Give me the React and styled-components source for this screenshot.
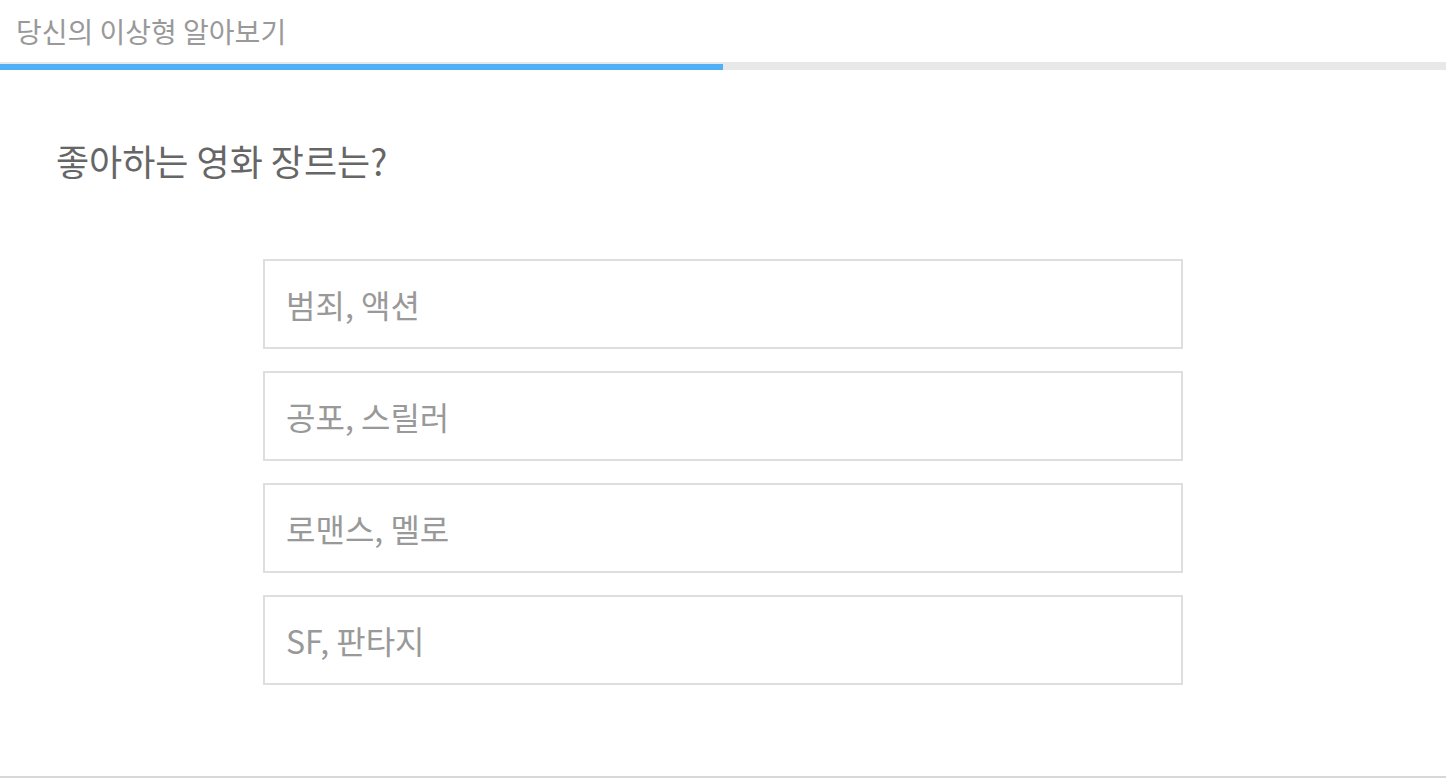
import styled, { createGlobalStyle } from "styled-components";

const GlobalStyle = createGlobalStyle`
  * {
    box-sizing: border-box;
  }

  body {
    margin: 0;
    background: #fff;
    font-family: "Noto Sans CJK KR", "Noto Sans", sans-serif;
  }
`;

const genres = ["범죄, 액션", "공포, 스릴러", "로맨스, 멜로", "SF, 판타지"];

const App = () => {
  const step = 1;
  const total = 2;

  return (
    <Page>
      <GlobalStyle />
      <Header>
        <Title>당신의 이상형 알아보기</Title>
      </Header>
      <Track>
        <Fill style={{ width: `${(step / total) * 100}%` }} />
      </Track>
      <Main>
        <Question>좋아하는 영화 장르는?</Question>
        <Options>
          {genres.map((genre) => (
            <Option key={genre}>{genre}</Option>
          ))}
        </Options>
      </Main>
    </Page>
  );
};

export default App;

const Page = styled.div`
  width: 100%;
`;

const Header = styled.header`
  height: 62px;
  padding: 0 16px;
  display: flex;
  align-items: center;
`;

const Title = styled.h1`
  margin: 0;
  font-size: 28px;
  font-weight: 400;
  color: #999;
`;

const Track = styled.div`
  height: 8px;
  padding-top: 2px;
  background: #e8e8e8;
`;

const Fill = styled.div`
  height: 6px;
  background: #4fb0f6;
`;

const Main = styled.main`
  height: 708px;
  border-bottom: 2px solid #d8d8d8;
  padding: 66px 56px 0;
`;

const Question = styled.h2`
  margin: 0;
  font-size: 36px;
  font-weight: 400;
  line-height: 48px;
  color: #666;
`;

const Options = styled.div`
  width: 920px;
  margin: 75px auto 0;
  display: flex;
  flex-direction: column;
  gap: 22px;
`;

const Option = styled.div`
  height: 90px;
  border: 2px solid #dedede;
  padding: 0 21px;
  display: flex;
  align-items: center;
  font-size: 32px;
  color: #999;
  cursor: pointer;
`;
